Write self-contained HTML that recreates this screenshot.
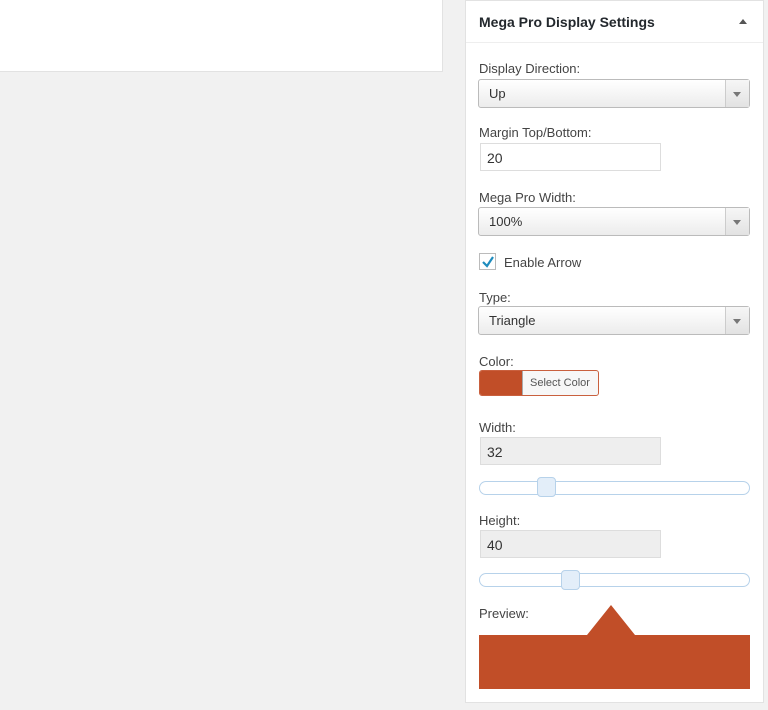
<!DOCTYPE html>
<html><head><meta charset="utf-8"><style>
*{box-sizing:border-box}
body{margin:0;width:768px;height:710px;background:#f1f1f1;font-family:"Liberation Sans",sans-serif;color:#444;position:relative;overflow:hidden;font-size:13px}
.a{position:absolute}
.lbl{position:absolute;left:479px;font-size:13px;color:#444}
.sel{position:absolute;left:478px;width:272px;height:29px;border:1px solid #bbb;border-radius:3px;background:linear-gradient(#fff,#ececec);padding:6px 10px;font-size:13px;color:#333}
.sel:after{content:"";position:absolute;right:0;top:0;width:23px;height:27px;border-left:1px solid #ccc;background:linear-gradient(#f6f6f6,#e2e2e2)}
.sel i{position:absolute;right:8px;top:12px;border:4px solid transparent;border-top:5px solid #777;z-index:2}
.inp{position:absolute;left:480px;width:181px;height:28px;border:1px solid #ddd;padding:6px 6px;font-size:14px;color:#333;background:#fff}
.slider{position:absolute;left:479px;width:271px;height:14px;border:1px solid #b7d2ea;border-radius:7px;background:#fff}
.h{position:absolute;width:19px;height:20px;border:1px solid #b7d2ea;border-radius:4px;background:#e3eef9}
</style></head><body>
<div class="a" style="left:0;top:0;width:443px;height:72px;background:#fff;border:1px solid #e2e2e2;border-top:0;border-left:0"></div>
<div class="a" style="left:465px;top:0;width:299px;height:703px;background:#fff;border:1px solid #e2e2e2"></div>
<div class="a" style="left:466px;top:42px;width:297px;height:1px;background:#eee"></div>
<div class="a" style="left:479px;top:14px;font-size:14px;font-weight:bold;color:#23282d">Mega Pro Display Settings</div>
<div class="a" style="left:739px;top:19px;border:4px solid transparent;border-bottom:5px solid #555;border-top:0"></div>

<div class="lbl" style="top:61px">Display Direction:</div>
<div class="sel" style="top:79px">Up<i></i></div>
<div class="lbl" style="top:125px">Margin Top/Bottom:</div>
<div class="inp" style="top:143px">20</div>
<div class="lbl" style="top:190px">Mega Pro Width:</div>
<div class="sel" style="top:207px">100%<i></i></div>
<div class="a" style="left:479px;top:253px;width:17px;height:17px;border:1px solid #bbb;background:#fff"></div>
<svg class="a" style="left:480px;top:254px" width="16" height="16"><path d="M3 8 L7 12 L13 3" stroke="#1e8cbe" stroke-width="2.2" fill="none"/></svg>
<div class="a" style="left:504px;top:255px;font-size:13px">Enable Arrow</div>
<div class="lbl" style="top:290px">Type:</div>
<div class="sel" style="top:306px">Triangle<i></i></div>
<div class="lbl" style="top:354px">Color:</div>
<div class="a" style="left:479px;top:370px;width:120px;height:26px;border:1px solid #c9603e;border-radius:3px;background:#f7f7f7;overflow:hidden">
<div class="a" style="left:0;top:0;width:43px;height:24px;background:#c14e28;border-right:1px solid #aaa"></div>
<div class="a" style="left:50px;top:6px;font-size:11px;color:#555">Select Color</div></div>
<div class="lbl" style="top:420px">Width:</div>
<div class="inp" style="top:437px;background:#eee">32</div>
<div class="slider" style="top:481px"></div><div class="h" style="left:537px;top:477px"></div>
<div class="lbl" style="top:513px">Height:</div>
<div class="inp" style="top:530px;background:#eee">40</div>
<div class="slider" style="top:573px"></div><div class="h" style="left:561px;top:570px"></div>
<div class="lbl" style="top:606px">Preview:</div>
<svg class="a" style="left:479px;top:604px" width="271" height="86"><path d="M0 31 H108 L132 1 L156 31 H271 V85 H0Z" fill="#c14e28"/></svg>
</body></html>
